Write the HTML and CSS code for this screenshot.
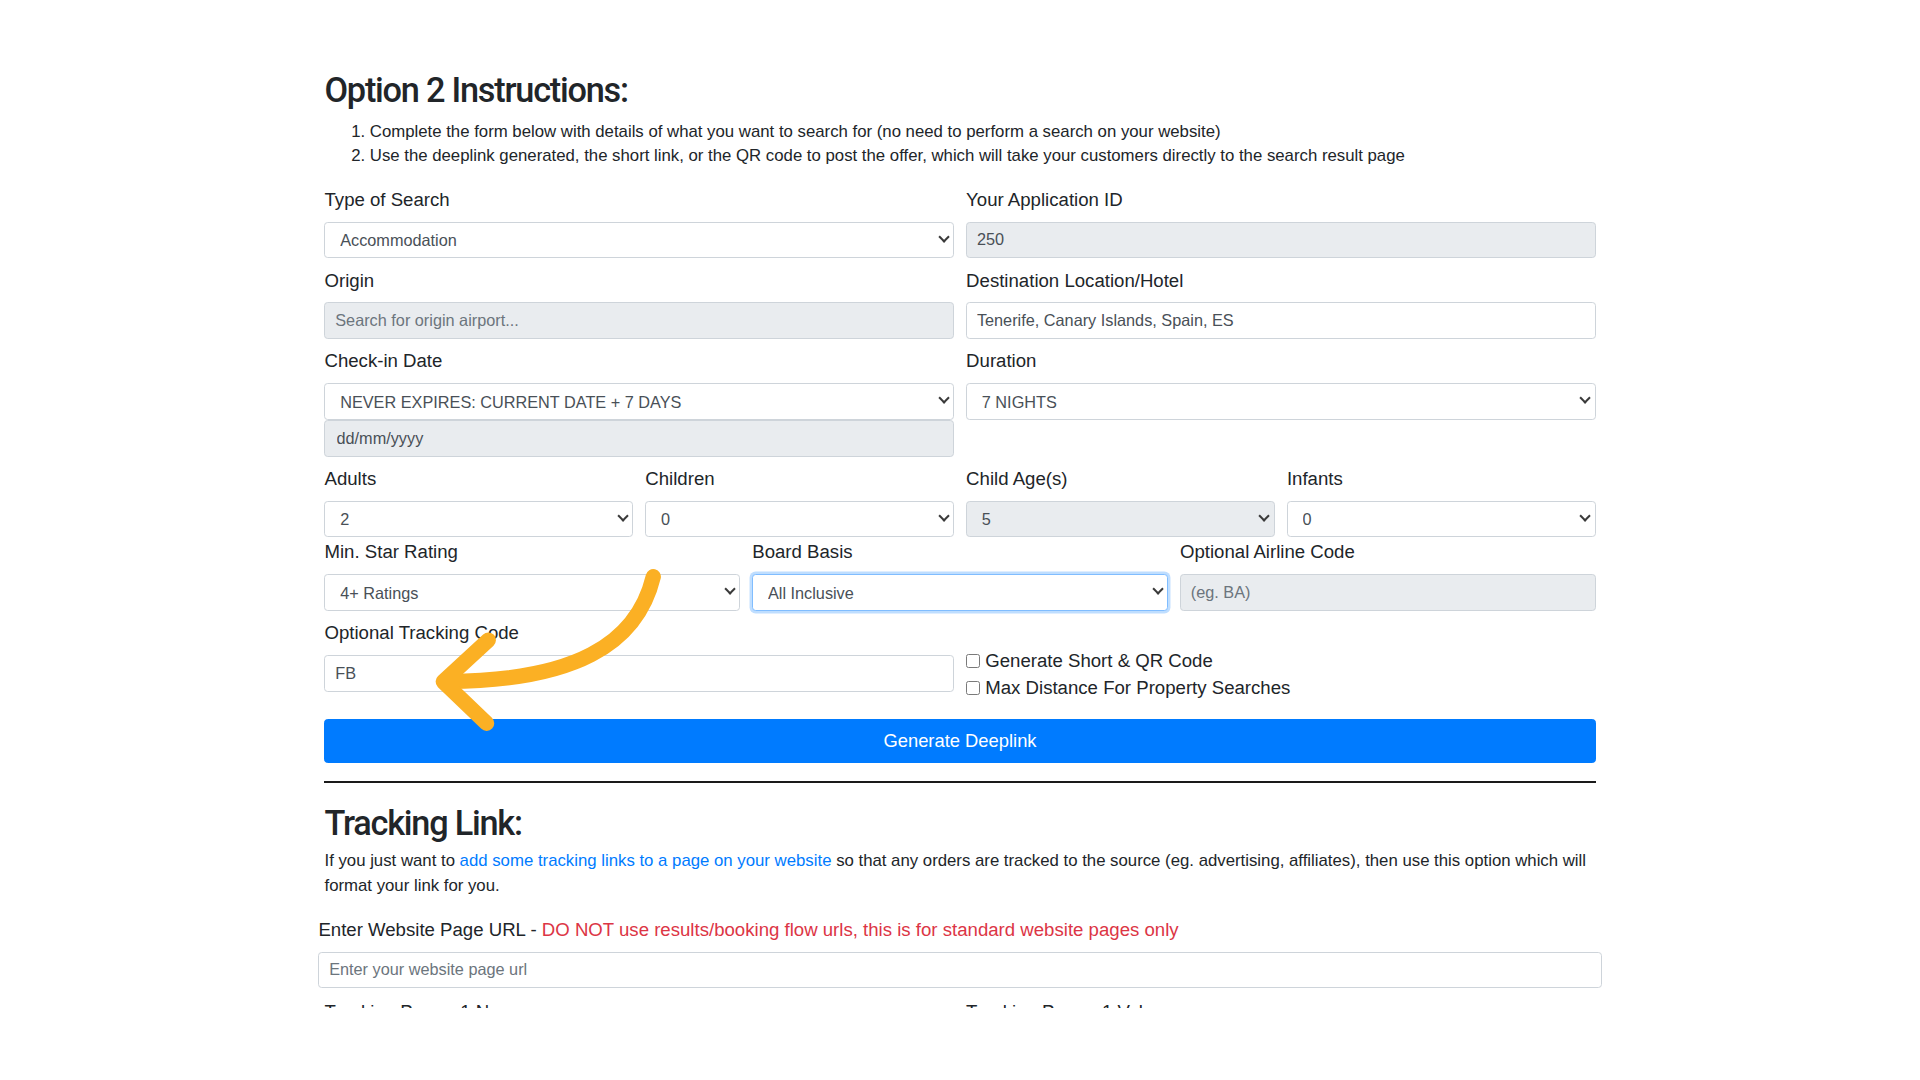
FILE: index.html
```html
<!DOCTYPE html>
<html lang="en">
<head>
<meta charset="utf-8">
<title>Option 2 Instructions</title>
<link rel="stylesheet" href="styles.css">
</head>
<body>
<div class="canvas">
  <div class="clip">
    <div class="container">
      <h3 class="heading">Option 2 Instructions:</h3>
      <ol class="steps">
        <li>Complete the form below with details of what you want to search for (no need to perform a search on your website)</li>
        <li>Use the deeplink generated, the short link, or the QR code to post the offer, which will take your customers directly to the search result page</li>
      </ol>

      <div class="row row2">
        <div class="group">
          <label class="label">Type of Search</label>
          <div class="select"><select class="field"><option>Accommodation</option></select></div>
        </div>
        <div class="group">
          <label class="label">Your Application ID</label>
          <input class="field disabled" value="250" disabled>
        </div>
      </div>

      <div class="row row2">
        <div class="group">
          <label class="label">Origin</label>
          <input class="field disabled" placeholder="Search for origin airport..." disabled>
        </div>
        <div class="group">
          <label class="label">Destination Location/Hotel</label>
          <input class="field" value="Tenerife, Canary Islands, Spain, ES">
        </div>
      </div>

      <div class="row row2">
        <div class="group">
          <label class="label">Check-in Date</label>
          <div class="select"><select class="field"><option>NEVER EXPIRES: CURRENT DATE + 7 DAYS</option></select></div>
          <input class="field disabled date" value="dd/mm/yyyy" disabled>
        </div>
        <div class="group">
          <label class="label">Duration</label>
          <div class="select"><select class="field"><option>7 NIGHTS</option></select></div>
        </div>
      </div>

      <div class="row row4">
        <div class="group flush">
          <label class="label">Adults</label>
          <div class="select"><select class="field"><option>2</option></select></div>
        </div>
        <div class="group flush">
          <label class="label">Children</label>
          <div class="select"><select class="field"><option>0</option></select></div>
        </div>
        <div class="group flush">
          <label class="label">Child Age(s)</label>
          <div class="select"><select class="field disabled" disabled><option>5</option></select></div>
        </div>
        <div class="group flush">
          <label class="label">Infants</label>
          <div class="select"><select class="field"><option>0</option></select></div>
        </div>
      </div>

      <div class="row row3">
        <div class="group">
          <label class="label">Min. Star Rating</label>
          <div class="select"><select class="field"><option>4+ Ratings</option></select></div>
        </div>
        <div class="group">
          <label class="label">Board Basis</label>
          <div class="select"><select class="field focus"><option>All Inclusive</option></select></div>
        </div>
        <div class="group">
          <label class="label">Optional Airline Code</label>
          <input class="field disabled" placeholder="(eg. BA)" disabled>
        </div>
      </div>

      <div class="row row2">
        <div class="group">
          <label class="label">Optional Tracking Code</label>
          <input class="field" value="FB">
        </div>
        <div class="checks">
          <label class="check"><span class="box"></span>Generate Short &amp; QR Code</label>
          <label class="check"><span class="box"></span>Max Distance For Property Searches</label>
        </div>
      </div>

      <button class="btn">Generate Deeplink</button>

      <hr class="rule">

      <h3 class="heading heading-2">Tracking Link:</h3>
      <p class="intro"><span>If you just want to </span><a href="#" class="link">add some tracking links to a page on your website</a><span> so that any orders are tracked to the source (eg. advertising, affiliates), then use this option which will</span><br><span>format your link for you.</span></p>

      <div class="wide">
        <label class="label">Enter Website Page URL - <span class="warn">DO NOT use results/booking flow urls, this is for standard website pages only</span></label>
        <input class="field url" placeholder="Enter your website page url">
      </div>

      <div class="row row2 params">
        <label class="label">Tracking Param 1 Name</label>
        <label class="label">Tracking Param 1 Value</label>
      </div>
    </div>
  </div>

  <svg class="arrow" viewBox="0 0 1568 882" width="1568" height="882" aria-hidden="true">
    <path d="M533.5 471 C 520 527, 468 556, 366 556.5" fill="none" stroke="#fbb024" stroke-width="12.5" stroke-linecap="round"/>
    <polyline points="398.8,522.7 362,556.7 397.4,590.7" fill="none" stroke="#fbb024" stroke-width="12.5" stroke-linecap="round" stroke-linejoin="round"/>
  </svg>
</div>
</body>
</html>
```

FILE: styles.css
```css
html {
  zoom: 1.22449;
}

body {
  margin: 0;
  background: #ffffff;
  font-family: "Liberation Sans", Arial, sans-serif;
  font-size: 15.2px;
  line-height: 24px;
  color: #212529;
}

.canvas {
  position: relative;
  width: 1568px;
  height: 882px;
  overflow: hidden;
  background: #ffffff;
}

.clip {
  height: 823px;
  overflow: hidden;
}

.container {
  width: 1038px;
  margin: 0 auto;
  padding-top: 57px;
}

.heading {
  margin: 0 0 7px;
  font-family: Roboto, "Liberation Sans", Arial, sans-serif;
  font-weight: 500;
  font-size: 28px;
  line-height: 34px;
  letter-spacing: -1px;
  color: #212529;
}

.steps {
  margin: 0 0 13px;
  padding-left: 37px;
  font-size: 13.7px;
  line-height: 20px;
}

.row {
  display: grid;
  column-gap: 10px;
}

.row2 {
  grid-template-columns: 1fr 1fr;
}

.row3 {
  grid-template-columns: 1fr 1fr 1fr;
}

.row4 {
  grid-template-columns: 1fr 1fr 1fr 1fr;
}

.group {
  display: flex;
  flex-direction: column;
  margin-bottom: 6px;
}

.group.flush {
  margin-bottom: 0;
}

.label {
  display: block;
  margin-bottom: 6px;
  font-size: 15.2px;
  line-height: 24px;
  color: #212529;
}

.field {
  display: block;
  width: 100%;
  height: 30px;
  box-sizing: border-box;
  margin: 0;
  padding: 0 8px;
  border: 1px solid #ced4da;
  border-radius: 3px;
  background: #ffffff;
  font-family: "Liberation Sans", Arial, sans-serif;
  font-size: 13.3px;
  color: #495057;
  outline: none;
  -webkit-appearance: none;
  appearance: none;
}

.field::placeholder {
  color: #6c757d;
  opacity: 1;
}

.field.disabled {
  background: #e9ecef;
  color: #495057;
  opacity: 1;
}

.field.date {
  color: #495057;
  padding-left: 9px;
}

.select {
  position: relative;
}

.select .field {
  padding-left: 12px;
  padding-right: 24px;
}

.select::after {
  content: "";
  position: absolute;
  right: 5px;
  top: 9px;
  width: 5px;
  height: 5px;
  border-right: 2px solid #3a3a3a;
  border-bottom: 2px solid #3a3a3a;
  transform: rotate(45deg);
  pointer-events: none;
}

.field.focus {
  border-color: #80bdff;
  box-shadow: 0 0 0 2px rgba(0, 123, 255, 0.25);
}

.checks {
  padding-top: 24px;
  display: flex;
  flex-direction: column;
}

.check {
  display: flex;
  align-items: center;
  gap: 4px;
  font-size: 15.2px;
  line-height: 22px;
  color: #212529;
}

.box {
  width: 10px;
  height: 10px;
  border: 1px solid #7a7a7a;
  border-radius: 2px;
  background: #ffffff;
  flex: none;
}

.btn {
  display: block;
  width: 100%;
  height: 36px;
  margin-top: 14px;
  border: 1px solid #007bff;
  border-radius: 3px;
  background: #007bff;
  color: #ffffff;
  font-family: "Liberation Sans", Arial, sans-serif;
  font-size: 15px;
  cursor: pointer;
}

.rule {
  margin: 15px 0 16px;
  border: 0;
  border-top: 2px solid #1a1a1a;
  height: 0;
}

.heading-2 {
  margin-bottom: 4px;
}

.intro {
  margin: 0 0 14px;
  font-size: 13.7px;
  line-height: 20px;
}

.link {
  color: #007bff;
  text-decoration: none;
}

.warn {
  color: #dc3545;
}

.wide {
  margin: 0 -5px;
}

.field.url {
  height: 29px;
}

.params {
  margin-top: 8px;
}

.arrow {
  position: absolute;
  left: 0;
  top: 0;
  pointer-events: none;
}
```
